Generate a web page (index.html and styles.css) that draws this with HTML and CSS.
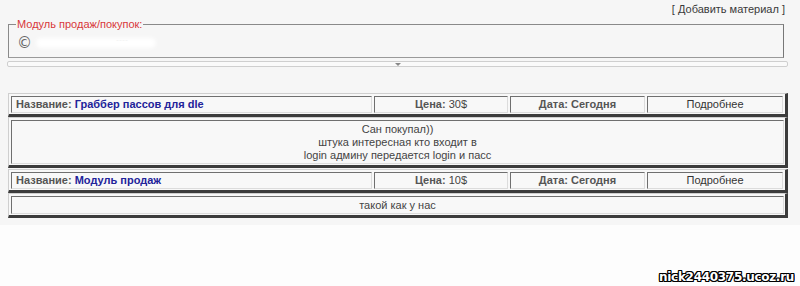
FILE: index.html
```html
<!DOCTYPE html>
<html>
<head>
<meta charset="utf-8">
<link rel="stylesheet" href="styles.css">
</head>
<body>
<div class="page">
  <div class="toplinks"><a class="addlink" href="#">[ Добавить материал ]</a></div>
  <fieldset class="module">
    <legend>Модуль продаж/покупок:</legend>
    <div class="copy"><span class="copy-sign">©</span><span class="blur"></span><span class="dash">----</span></div>
  </fieldset>
  <div class="slider"><span class="arrow"></span></div>

  <div class="list">
    <div class="tbl">
      <div class="row">
        <div class="cell c-name"><b class="lbl">Название:</b> <b class="title">Граббер пассов для dle</b></div>
        <div class="cell c-price"><b class="lbl">Цена:</b> 30$</div>
        <div class="cell c-date"><b class="lbl">Дата: Сегодня</b></div>
        <div class="cell c-more">Подробнее</div>
      </div>
    </div>
    <div class="tbl">
      <div class="cell c-desc">Сан покупал))<br>штука интересная кто входит в<br>login админу передается login и пасс</div>
    </div>
    <div class="tbl tbl-gap">
      <div class="row">
        <div class="cell c-name"><b class="lbl">Название:</b> <b class="title">Модуль продаж</b></div>
        <div class="cell c-price"><b class="lbl">Цена:</b> 10$</div>
        <div class="cell c-date"><b class="lbl">Дата: Сегодня</b></div>
        <div class="cell c-more">Подробнее</div>
      </div>
    </div>
    <div class="tbl">
      <div class="cell c-desc">такой как у нас</div>
    </div>
  </div>
</div>
<div class="watermark">nick2440375.ucoz.ru</div>
</body>
</html>
```
FILE: styles.css
```css
html, body {
  margin: 0;
  padding: 0;
}
body {
  width: 800px;
  height: 286px;
  background: #fdfdfd;
  font-family: "Liberation Sans", Arial, sans-serif;
  font-size: 11px;
  color: #444;
  position: relative;
  overflow: hidden;
}
.page {
  background: #f6f6f6;
  padding: 2px 12px 10px 8px;
  height: 213px;
}
.toplinks {
  text-align: right;
  height: 16px;
  line-height: 14px;
  padding-right: 3px;
}
.addlink {
  color: #3a3a3a;
  text-decoration: none;
}
.module {
  margin: 0 4px 0 0;
  border: 1px solid #8a8a8a;
  border-right-color: #777;
  border-bottom-color: #9a9a9a;
  padding: 0 8px;
  height: 40px;
  box-sizing: border-box;
  min-height: 0;
}
.module legend {
  color: #d8373a;
  padding: 0 1px;
  margin-left: -1px;
  line-height: 12px;
}
.copy {
  display: flex;
  align-items: center;
  height: 26px;
}
.copy-sign {
  color: #666;
  font-size: 15px;
  font-family: "DejaVu Sans", sans-serif;
}
.blur {
  display: inline-block;
  width: 120px;
  height: 10px;
  background: #fff;
  margin-left: 4px;
  border-radius: 5px;
  filter: blur(2px);
}
.dash {
  color: #999;
  font-size: 9px;
  margin-left: -40px;
  margin-top: -6px;
}
.slider {
  margin: 3px 0 0 -1px;
  height: 4px;
  border: 1px solid #cfcfcf;
  border-radius: 2px;
  background: #fafafa;
  display: flex;
  justify-content: center;
}
.arrow {
  width: 0;
  height: 0;
  border-left: 3px solid transparent;
  border-right: 3px solid transparent;
  border-top: 3px solid #888;
  margin-top: 1px;
}
.list {
  margin-top: 26px;
}
.tbl {
  border-top: 1px solid #cfcfcf;
  border-left: 1px solid #cfcfcf;
  border-right: 3px solid #3c3c3c;
  border-bottom: 3px solid #3c3c3c;
  padding: 2px 1px 1px 2px;
  background: #f8f8f8;
}
.tbl-gap {
  margin-top: 1px;
}
.row {
  display: flex;
  gap: 2px;
}
.cell {
  border-top: 1px solid #6f6f6f;
  border-left: 1px solid #6f6f6f;
  border-right: 1px solid #dcdcdc;
  border-bottom: 1px solid #dcdcdc;
  background: #f8f8f8;
  height: 15px;
  line-height: 15px;
  white-space: nowrap;
}
.c-name {
  width: 355px;
  padding-left: 4px;
}
.c-price {
  width: 132px;
  text-align: center;
}
.c-date {
  width: 133px;
  text-align: center;
}
.c-more {
  width: 134px;
  text-align: center;
  color: #333;
}
.lbl {
  color: #555;
}
.title {
  color: #22239a;
}
.c-desc {
  height: auto;
  line-height: 13px;
  text-align: center;
  padding: 2px 0 1px;
  white-space: normal;
}
.watermark {
  position: absolute;
  right: 6px;
  bottom: 2px;
  font-family: "DejaVu Sans", sans-serif;
  font-weight: bold;
  font-size: 12px;
  color: #fff;
  letter-spacing: -0.3px;
  text-shadow: -1px -1px 0 #000, 1px -1px 0 #000, -1px 1px 0 #000, 1px 1px 0 #000, 0 1px 0 #000, 0 -1px 0 #000, 1px 0 0 #000, -1px 0 0 #000;
}
```
